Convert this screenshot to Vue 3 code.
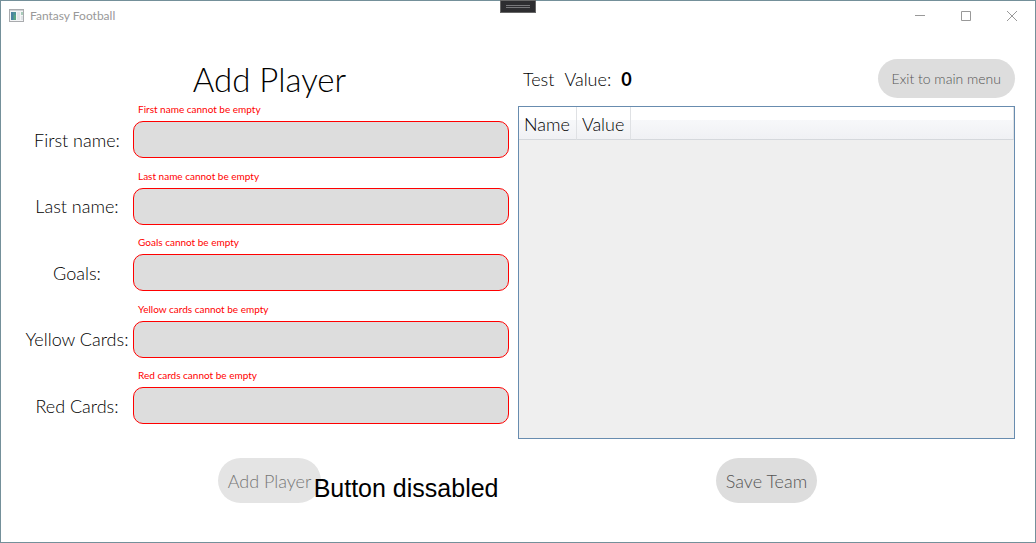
<script setup>
import { reactive } from 'vue'

const fields = reactive([
  { id: 'first-name', label: 'First name:', error: 'First name cannot be empty', value: '' },
  { id: 'last-name', label: 'Last name:', error: 'Last name cannot be empty', value: '' },
  { id: 'goals', label: 'Goals:', error: 'Goals cannot be empty', value: '' },
  { id: 'yellow-cards', label: 'Yellow Cards:', error: 'Yellow cards cannot be empty', value: '' },
  { id: 'red-cards', label: 'Red Cards:', error: 'Red cards cannot be empty', value: '' },
])
</script>

<template>
  <div class="window">
    <header class="titlebar">
      <svg class="app-icon" width="16" height="14" viewBox="0 0 16 14" aria-hidden="true">
        <rect x="0.5" y="0.5" width="14" height="12" fill="#f4f5f6" stroke="#a9abae" />
        <rect x="1" y="1" width="13" height="1" fill="#cfd2d5" />
        <rect x="2" y="3" width="5" height="8" fill="#4f9398" />
        <rect x="2" y="3" width="2" height="8" fill="#4b82a0" />
        <rect x="5" y="6" width="2" height="5" fill="#5aa583" />
        <rect x="8" y="3" width="3" height="8" fill="#e3e5e8" />
        <rect x="12" y="3" width="2" height="3" fill="#a8cbb9" />
        <rect x="12" y="7" width="2" height="4" fill="#dfe3e6" />
      </svg>
      <span class="caption">Fantasy Football</span>
      <div class="controls">
        <button type="button" aria-label="Minimize">
          <svg width="10" height="10" viewBox="0 0 10 10"><path d="M0 4.5H10" /></svg>
        </button>
        <button type="button" aria-label="Maximize">
          <svg width="10" height="10" viewBox="0 0 10 10"><path d="M.5 .5H9.5V9.5H.5Z" /></svg>
        </button>
        <button type="button" aria-label="Close">
          <svg width="10" height="10" viewBox="0 0 10 10"><path d="M0 0L10 10M10 0L0 10" /></svg>
        </button>
      </div>
      <div class="debug-handle"><i></i><i></i></div>
    </header>

    <main class="content">
      <section class="panel">
        <h1 class="title">Add Player</h1>
        <form class="fields" @submit.prevent>
          <div v-for="f in fields" :key="f.id" class="field">
            <p :id="f.id + '-error'" class="error">{{ f.error }}</p>
            <label :for="f.id">{{ f.label }}</label>
            <input :id="f.id" v-model="f.value" type="text" :aria-describedby="f.id + '-error'" />
          </div>
        </form>
        <div class="actions">
          <div class="with-tip">
            <button type="button" class="pill" disabled>Add Player</button>
            <span class="tip">Button dissabled</span>
          </div>
        </div>
      </section>

      <section class="panel">
        <div class="summary">
          <span>Test</span>
          <span>Value:</span>
          <strong>0</strong>
          <button type="button" class="pill small">Exit to main menu</button>
        </div>
        <div class="grid-view">
          <table>
            <thead>
              <tr>
                <th scope="col">Name</th>
                <th scope="col">Value</th>
                <td class="rest"></td>
              </tr>
            </thead>
          </table>
        </div>
        <div class="actions">
          <button type="button" class="pill">Save Team</button>
        </div>
      </section>
    </main>
  </div>
</template>

<style>
body {
  margin: 0;
}
</style>

<style scoped>
* {
  box-sizing: border-box;
}
.window {
  display: flex;
  flex-direction: column;
  min-height: 100vh;
  border: 1px solid #74909a;
  background: #fff;
  color: #000;
  font: 300 18px/24px Lato, "Open Sans", sans-serif;
}
.titlebar {
  position: relative;
  display: flex;
  align-items: center;
  height: 30px;
  padding-left: 8px;
  gap: 5px;
}
.caption {
  color: #999;
  font: 400 12px/16px Lato, "Open Sans", sans-serif;
}
.controls {
  display: flex;
  height: 100%;
  margin-left: auto;
}
.controls button {
  display: flex;
  align-items: center;
  justify-content: center;
  width: 46px;
  padding: 0;
  border: 0;
  background: none;
}
.controls path {
  fill: none;
  stroke: #999;
}
.debug-handle {
  position: absolute;
  top: -1px;
  left: 50%;
  display: flex;
  flex-direction: column;
  gap: 1px;
  width: 36px;
  height: 13px;
  margin-left: -18px;
  padding: 4px 5px;
  border: 1px solid #666;
  background: #2d2d30;
}
.debug-handle i {
  height: 1px;
  background: #77777a;
}
.content {
  flex: 1;
  display: grid;
  grid-template-columns: 1fr 1fr;
  padding: 20px;
}
.panel {
  display: grid;
  grid-template-rows: 55px 1fr 83px;
  min-width: 0;
}
.title {
  margin: 0;
  padding-top: 8px;
  text-align: center;
  font-size: 33px;
  font-weight: 300;
  line-height: 40px;
}
.fields {
  display: grid;
  grid-auto-rows: 1fr;
  padding-right: 9px;
}
.field {
  display: grid;
  grid-template-columns: 112px 1fr;
  grid-template-rows: 15px 37px;
  align-content: start;
}
.error {
  grid-column: 2;
  margin: 0;
  padding-left: 5px;
  color: #f00;
  font: 400 10px/6px Lato, "Open Sans", sans-serif;
}
.field label {
  align-self: center;
  text-align: center;
  white-space: nowrap;
}
.field input {
  width: 100%;
  padding: 0 10px;
  border: 1px solid #f00;
  border-radius: 10px;
  background: #ddd;
  font: inherit;
  outline: 0;
}
.actions {
  display: flex;
  align-items: center;
  justify-content: center;
}
.with-tip {
  position: relative;
}
.pill {
  display: block;
  height: 45px;
  padding: 0 10px;
  border: 0;
  border-radius: 23px;
  background: #ddd;
  color: #555;
  font: inherit;
  white-space: nowrap;
}
.pill:disabled {
  background: #e4e4e4;
  color: #777;
}
.pill.small {
  height: 39px;
  margin-left: auto;
  padding: 0 14px;
  font-size: 14px;
}
.tip {
  position: absolute;
  left: 96px;
  top: 15px;
  white-space: nowrap;
  color: #000;
  font: 400 25px/30px "Liberation Sans", Arial, sans-serif;
}
.summary {
  display: flex;
  align-items: center;
  gap: 10px;
  padding-left: 5px;
}
.summary strong {
  font-weight: 700;
}
.grid-view {
  border: 1px solid #688caf;
  background: #efefef;
}
table {
  width: 100%;
  border-collapse: separate;
  border-spacing: 0;
}
th,
.rest {
  height: 33px;
  padding: 2px 6px 0 5px;
  border-right: 1px solid #dfe1e4;
  border-bottom: 1px solid #d5d8dc;
  background: linear-gradient(#fff 40%, #f7f8fa 40%, #f0f1f4);
  font-weight: 300;
  text-align: left;
}
th {
  width: 1px;
}
</style>
